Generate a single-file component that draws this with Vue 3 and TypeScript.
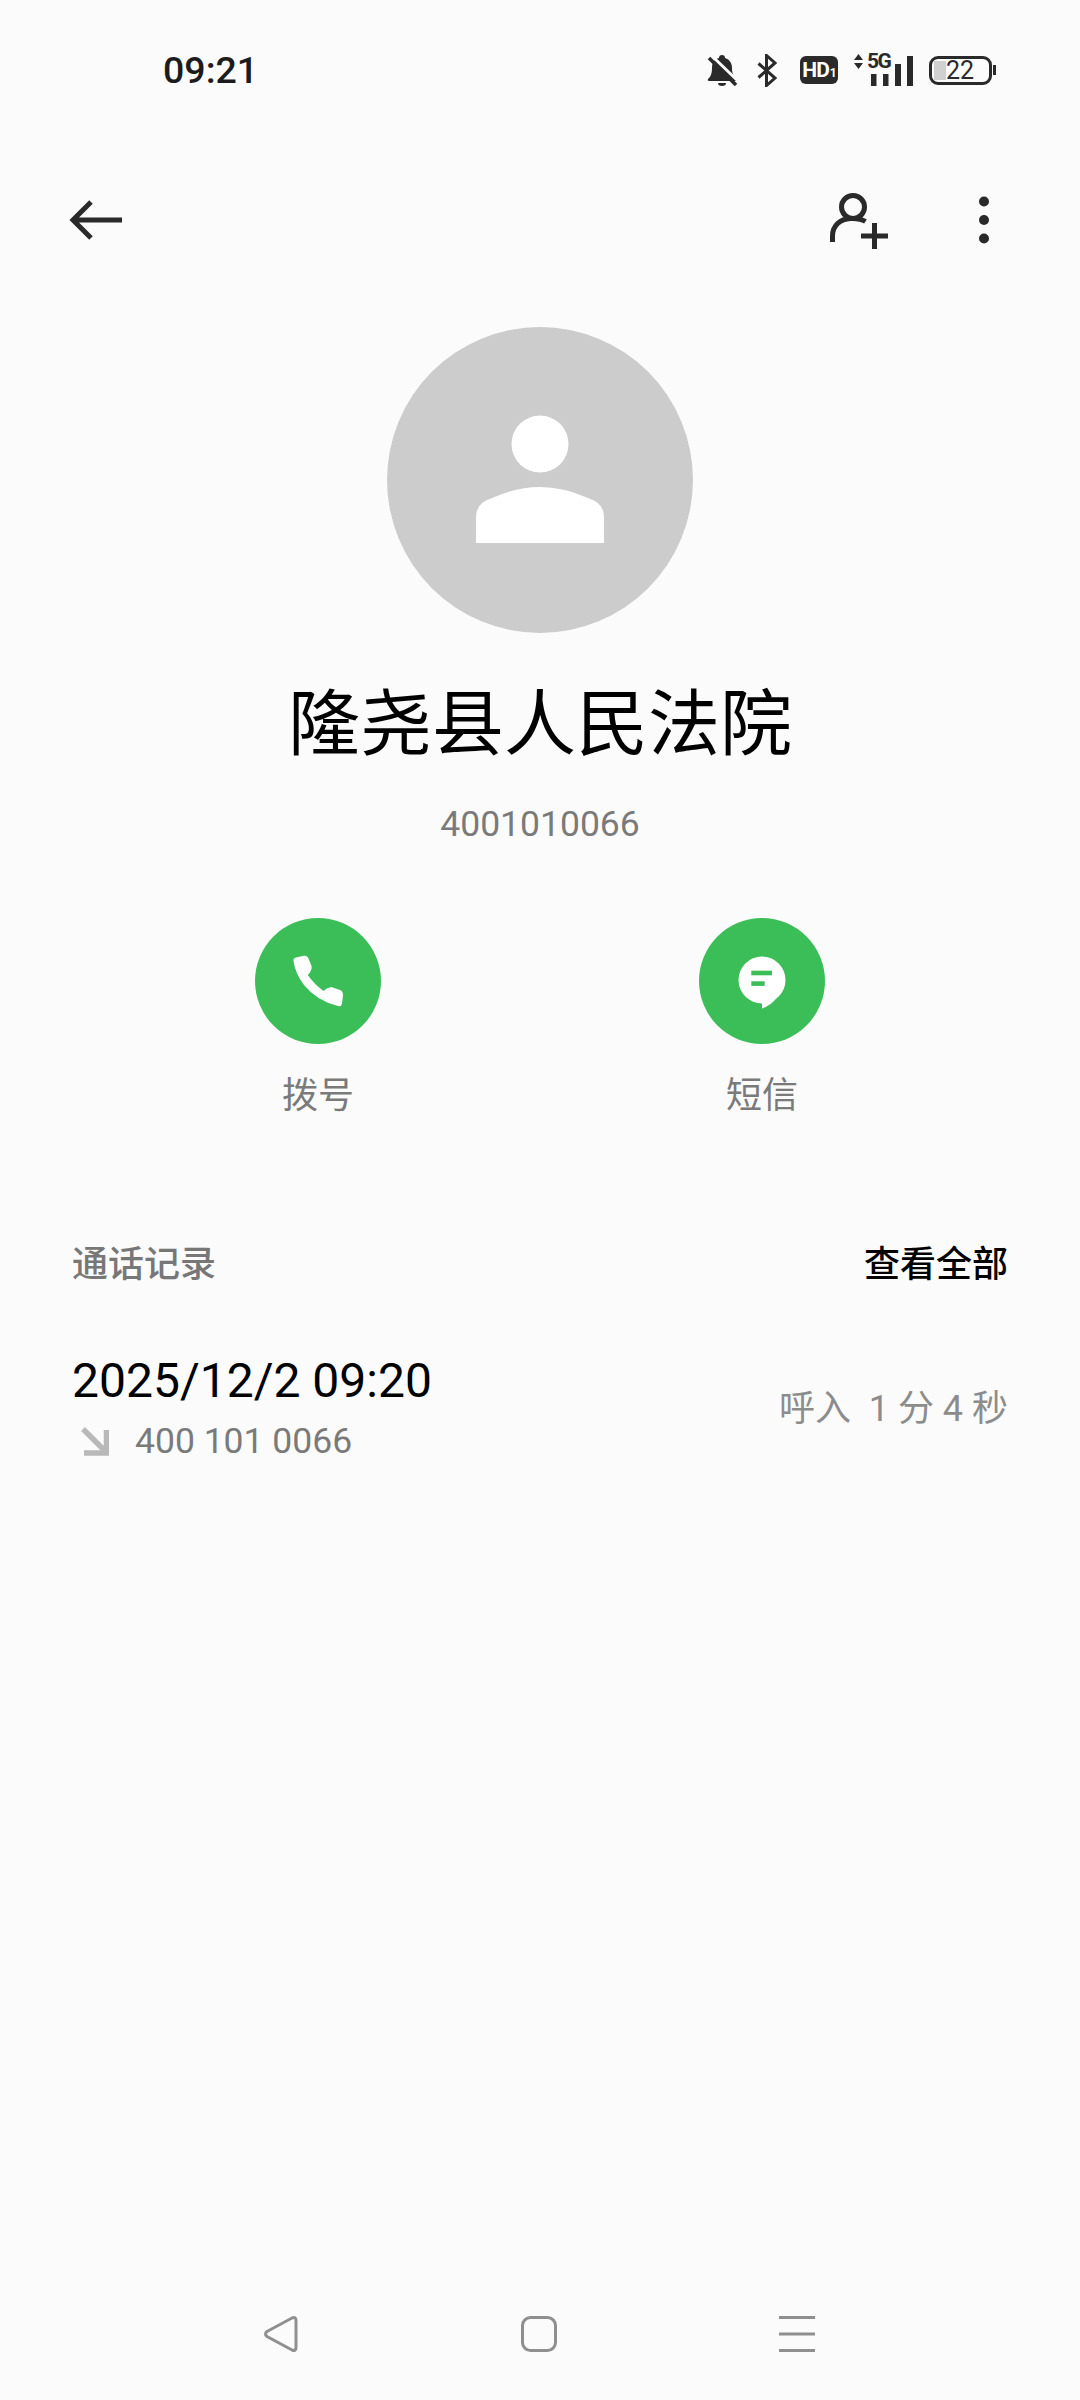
<template>
  <div class="page">
    <div class="status-bar">
      <span class="time">09:21</span>
      <div class="status-icons">
        <svg class="ic-bell" width="32" height="33" viewBox="0 0 32 33">
          <path d="M15 1a3 3 0 0 1 3 3c5 1.500 7 5.500 7 10 0 5 1 7.500 5 11 .5 1 0 2-1 2H2c-1 0-1.500-1-1-2 3-2.500 4-6 4-11 0-5 2-9 7-10a3 3 0 0 1 3-3z" fill="#2a2a2a" />
          <path d="M11 29h8a4 3 0 0 1-8 0z" fill="#2a2a2a" />
          <path d="M5 2 32 28" stroke="#fbfbfb" stroke-width="3" />
          <path d="M2 4 29 31" stroke="#2a2a2a" stroke-width="3.500" />
        </svg>
        <svg class="ic-bt" width="20" height="33" viewBox="0 0 20 33">
          <path d="M1.500 9.500 18 24l-8.500 7.500v-30L18 9 1.500 23.500" fill="none" stroke="#2a2a2a" stroke-width="3" />
        </svg>
        <div class="hd"><span>HD</span><small>1</small></div>
        <div class="signal">
          <svg width="60" height="33" viewBox="0 0 60 33">
            <path d="M0 6 4.500 0 9 6zM0 9h9l-4.500 6z" fill="#2a2a2a" />
            <rect x="17" y="20" width="5.500" height="12" fill="#2a2a2a" />
            <rect x="29" y="20" width="5.500" height="12" fill="#2a2a2a" />
            <rect x="41" y="10" width="6" height="22" fill="#2a2a2a" />
            <rect x="53" y="2" width="6" height="30" fill="#2a2a2a" />
          </svg>
          <span class="five-g">5G</span>
        </div>
        <div class="battery">
          <div class="battery-body">
            <i class="battery-level"></i>
            <span>22</span>
          </div>
          <i class="battery-nub"></i>
        </div>
      </div>
    </div>

    <div class="toolbar">
      <svg width="56" height="48" viewBox="0 0 56 48">
        <path d="M25 6 7 24l18 18M7 24h51" fill="none" stroke="#2a2a2a" stroke-width="5" />
      </svg>
      <div class="toolbar-right">
        <svg width="60" height="60" viewBox="0 0 60 60">
          <circle cx="24" cy="17" r="11.500" fill="none" stroke="#2a2a2a" stroke-width="5" />
          <path d="M3.500 52v-6c0-11 8-17 18-17.500 5-.2 11 .5 15 3" fill="none" stroke="#2a2a2a" stroke-width="5" />
          <path d="M32 46h27M45.500 33v26" stroke="#2a2a2a" stroke-width="5" />
        </svg>
        <svg width="10" height="48" viewBox="0 0 10 48">
          <circle cx="5" cy="5.500" r="5" fill="#2a2a2a" />
          <circle cx="5" cy="24" r="5" fill="#2a2a2a" />
          <circle cx="5" cy="42.500" r="5" fill="#2a2a2a" />
        </svg>
      </div>
    </div>

    <div class="avatar">
      <svg width="306" height="306" viewBox="0 0 306 306">
        <circle cx="153" cy="117" r="28.500" fill="#fff" />
        <path d="M89 216v-26q0-14 16-19 25-11 48-11t48 11q16 5 16 19v26z" fill="#fff" />
      </svg>
    </div>
    <h1 class="name">{{ contact.name }}</h1>
    <p class="number">{{ contact.number }}</p>

    <div class="actions">
      <div class="action">
        <div class="action-circle">
          <svg width="126" height="126" viewBox="0 0 126 126">
            <path d="M38.500 43q-.5-3 2.500-3.500l8-1.700q3.500-.3 4.500 2.700l3 7.500q1 4-3.700 9 6.200 9 15.700 16 4.500-4 8.500-3.700l8 2.700q3 1 3 5l-1 8.500q-.5 3.500-4 2.500-21-5-34-21-9-12-10.500-24z" fill="#fff" />
          </svg>
        </div>
        <span class="action-label">拨号</span>
      </div>
      <div class="action">
        <div class="action-circle">
          <svg width="126" height="126" viewBox="0 0 126 126">
            <circle cx="63" cy="62" r="23.500" fill="#fff" />
            <path d="M63 82v8.500q9-3 15-11z" fill="#fff" />
            <rect x="52.300" y="52.700" width="20.700" height="4.600" fill="#3bbd58" />
            <rect x="52.300" y="63.300" width="13.400" height="4.600" fill="#3bbd58" />
          </svg>
        </div>
        <span class="action-label">短信</span>
      </div>
    </div>

    <div class="section-head">
      <span class="section-title">通话记录</span>
      <span class="section-link">查看全部</span>
    </div>

    <div class="call-row">
      <div>
        <div class="call-date">{{ call.date }}</div>
        <div class="call-sub">
          <svg width="28" height="29" viewBox="0 0 28 29">
            <path d="M2 2 25 25M3 26h22.500V3" fill="none" stroke="#b9b9b9" stroke-width="5.500" />
          </svg>
          <span>{{ call.number }}</span>
        </div>
      </div>
      <span class="call-info">{{ call.info }}</span>
    </div>

    <div class="nav">
      <svg width="36" height="36" viewBox="0 0 36 36">
        <path d="M4 15.500 29 2q4-1.500 4 2.500v27q0 4-4 2.500L4 20.500q-3-2.500 0-5z" fill="none" stroke="#8f8f8f" stroke-width="3" />
      </svg>
      <svg width="36" height="36" viewBox="0 0 36 36">
        <rect x="1.500" y="1.500" width="33" height="33" rx="8" fill="none" stroke="#8f8f8f" stroke-width="3" />
      </svg>
      <svg width="36" height="36" viewBox="0 0 36 36">
        <path d="M0 1.500h36M0 18h36M0 34.500h36" stroke="#8f8f8f" stroke-width="3" />
      </svg>
    </div>
  </div>
</template>

<script setup lang="ts">
const contact = {
  name: '隆尧县人民法院',
  number: '4001010066',
}

const call = {
  date: '2025/12/2 09:20',
  number: '400 101 0066',
  info: '呼入  1 分 4 秒',
}
</script>

<style>
body {
  background: #fbfbfb;
}
</style>

<style scoped>
.page {
  display: flex;
  flex-direction: column;
  min-height: 2400px;
  background: #fbfbfb;
  font-family: Roboto, "Noto Sans CJK SC", sans-serif;
  color: #000;
}

.status-bar {
  display: flex;
  align-items: center;
  justify-content: space-between;
  height: 140px;
  padding: 0 84px 0 163px;
}

.time {
  font-size: 37.5px;
  font-weight: 500;
  color: #1c1c1c;
}

.status-icons {
  display: flex;
  align-items: center;
}

.ic-bell {
  margin-right: 18px;
}

.ic-bt {
  margin-right: 23px;
}

.hd {
  display: flex;
  align-items: baseline;
  justify-content: center;
  width: 38px;
  height: 28px;
  margin-right: 16px;
  border-radius: 6px;
  background: #2a2a2a;
  color: #fff;
  font-size: 21px;
  font-weight: 700;
  line-height: 28px;
  letter-spacing: -1px;
}

.hd small {
  font-size: 12px;
  margin-left: 1px;
}

.signal {
  position: relative;
  width: 60px;
  height: 33px;
  margin-right: 15px;
}

.signal svg {
  display: block;
}

.five-g {
  position: absolute;
  left: 13px;
  top: -3px;
  font-size: 21px;
  font-weight: 700;
  line-height: 20px;
  letter-spacing: -1.500px;
  color: #2a2a2a;
}

.battery {
  display: flex;
  align-items: center;
  gap: 1px;
}

.battery-body {
  position: relative;
  display: flex;
  align-items: center;
  box-sizing: border-box;
  width: 63px;
  height: 29px;
  padding-left: 14px;
  border: 3px solid #2a2a2a;
  border-radius: 9px;
  font-size: 25px;
  line-height: 23px;
  color: #2a2a2a;
}

.battery-level {
  position: absolute;
  left: 2px;
  top: 2px;
  bottom: 2px;
  width: 12px;
  background: #d0d0d0;
}

.battery-body span {
  position: relative;
}

.battery-nub {
  width: 3px;
  height: 10px;
  background: #2a2a2a;
}

.toolbar {
  display: flex;
  align-items: center;
  justify-content: space-between;
  height: 160px;
  padding: 0 91px 0 66px;
}

.toolbar svg {
  display: block;
}

.toolbar-right {
  display: flex;
  align-items: center;
  gap: 90px;
}

.avatar {
  align-self: center;
  width: 306px;
  height: 306px;
  margin-top: 27px;
  border-radius: 50%;
  background: #ccc;
}

.avatar svg {
  display: block;
}

.name {
  margin: 47px 0 0;
  font-size: 72px;
  font-weight: 400;
  line-height: 90px;
  text-align: center;
}

.number {
  margin: 32px 0 0;
  font-size: 35.500px;
  line-height: 44px;
  text-align: center;
  color: #7a7a7a;
}

.actions {
  display: flex;
  justify-content: center;
  gap: 318px;
  margin-top: 72px;
}

.action {
  display: flex;
  flex-direction: column;
  align-items: center;
  gap: 30px;
  width: 126px;
}

.action-circle {
  width: 126px;
  height: 126px;
  border-radius: 50%;
  background: #3bbd58;
}

.action-circle svg {
  display: block;
}

.action-label {
  font-size: 36px;
  line-height: 44px;
  color: #7a7a7a;
}

.section-head {
  display: flex;
  justify-content: space-between;
  margin-top: 125px;
  padding: 0 72px;
  font-size: 36px;
  font-weight: 500;
  line-height: 44px;
}

.section-title {
  color: #777;
}

.call-row {
  display: flex;
  align-items: center;
  justify-content: space-between;
  margin-top: 66px;
  padding: 0 72px;
}

.call-date {
  font-size: 48px;
  line-height: 56px;
}

.call-sub {
  display: flex;
  align-items: center;
  gap: 26px;
  margin-top: 10px;
  padding-left: 9px;
  font-size: 35.500px;
  line-height: 44px;
  color: #7a7a7a;
}

.call-info {
  margin-top: 1px;
  font-size: 36px;
  line-height: 44px;
  white-space: pre;
  color: #8c8c8c;
}

.nav {
  display: flex;
  align-items: center;
  justify-content: center;
  gap: 222px;
  height: 132px;
  margin-top: auto;
  padding-right: 2px;
}
</style>
